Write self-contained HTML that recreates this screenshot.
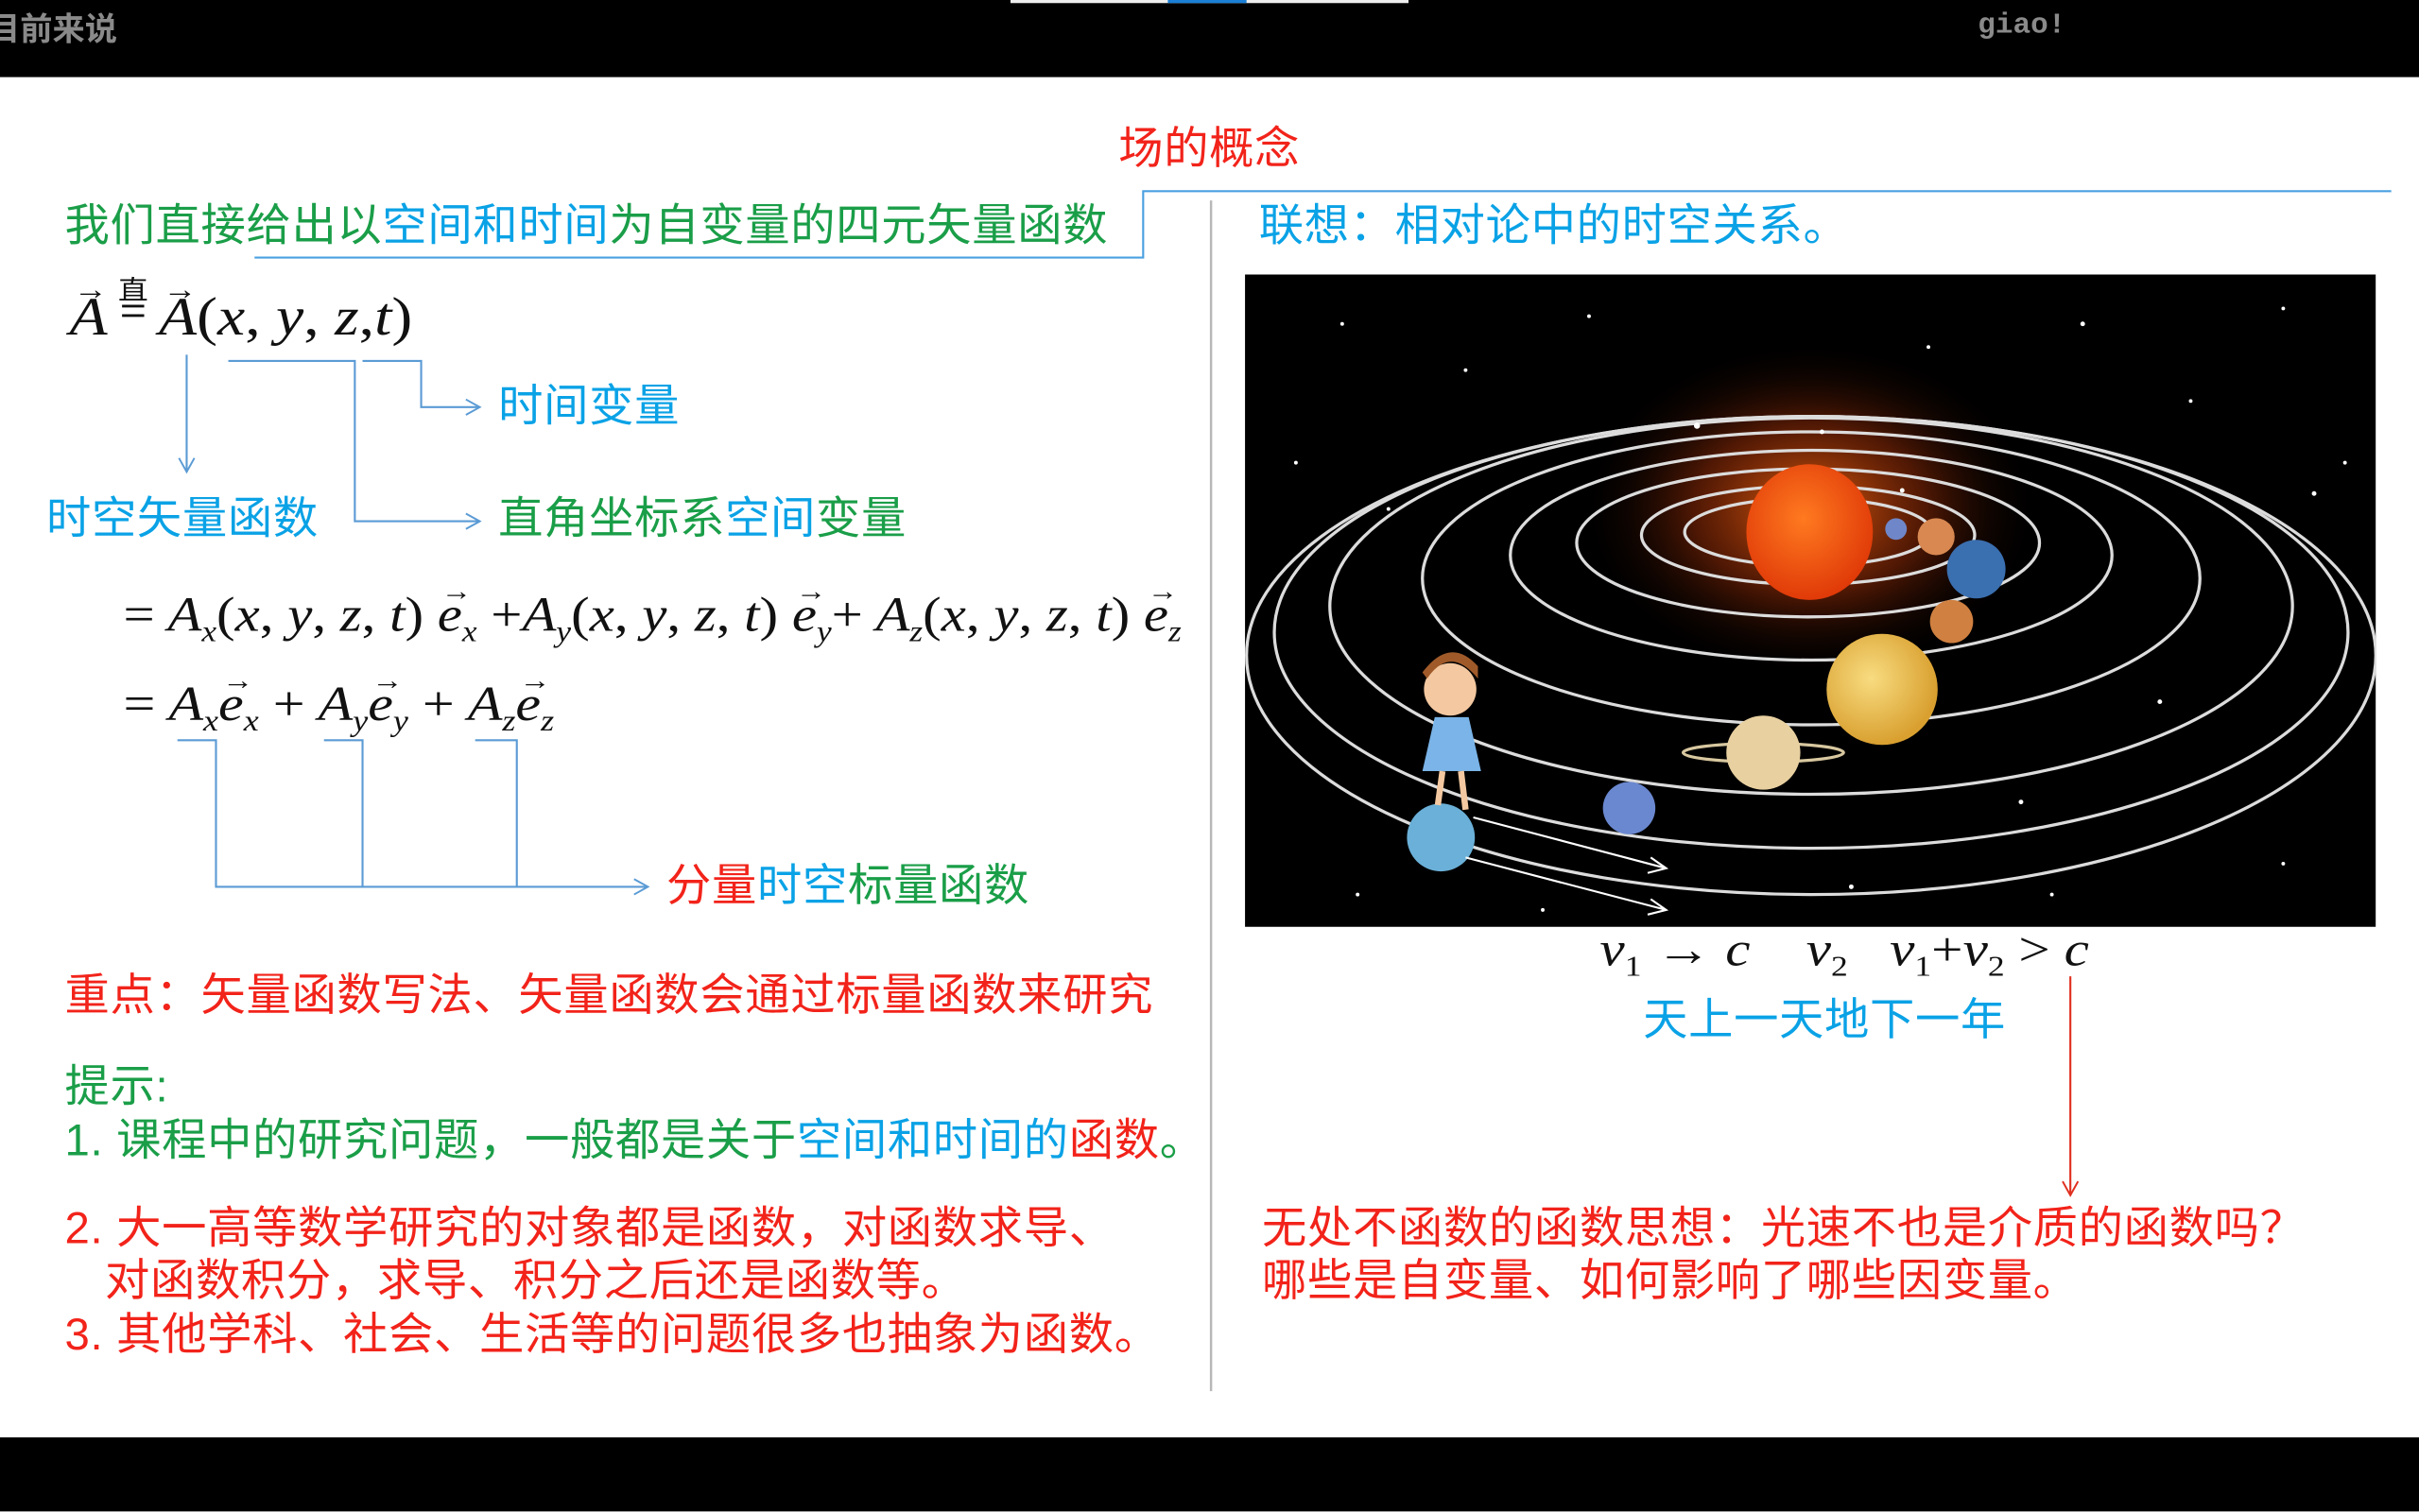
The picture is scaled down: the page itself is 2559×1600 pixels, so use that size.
<!DOCTYPE html>
<html><head><meta charset="utf-8"><style>
html,body{margin:0;padding:0;background:#fff;}
body{width:2559px;height:1600px;overflow:hidden;position:relative;}
#s{position:absolute;left:0;top:0;width:1568px;height:980px;transform:scale(1.63202);transform-origin:0 0;background:#fff;font-family:"Liberation Sans","Noto Sans CJK SC",sans-serif;}
.t{position:absolute;font-size:29px;line-height:34px;white-space:nowrap;letter-spacing:0.4px;}
.g{color:#1a9e48}.b{color:#0aa2e6}.r{color:#f2231a}
.m{position:absolute;font-family:"Liberation Serif",serif;font-style:italic;white-space:nowrap;color:#111;transform-origin:0 50%;}
.m sub{font-size:60%;vertical-align:-0.35em}
.up{font-style:normal}
.v{position:relative;display:inline-block}
.v::before{content:"\2192";position:absolute;left:0.12em;top:-0.42em;font-size:0.55em;font-style:normal}
</style></head><body><div id="s">
<div style="position:absolute;left:0;top:0;width:1568px;height:50px;background:#000"></div>
<div style="position:absolute;left:655px;top:0;width:258px;height:2px;background:#eee"></div>
<div style="position:absolute;left:757px;top:0;width:51px;height:2px;background:#1a7fd6"></div>
<div style="position:absolute;left:-8px;top:3px;color:#8a8a8a;font-weight:bold;font-size:21px;font-family:'Liberation Sans','Noto Sans CJK SC',sans-serif">目前来说</div>
<div style="position:absolute;left:1282px;top:5px;color:#8a8a8a;font-weight:bold;font-size:19px;font-family:'Liberation Mono',monospace">giao!</div>
<div style="position:absolute;left:0;top:932px;width:1568px;height:48px;background:#000"></div>

<svg style="position:absolute;left:0;top:0" width="1568" height="980">
<defs><marker id="ab" markerWidth="12" markerHeight="12" refX="10" refY="6" orient="auto" markerUnits="userSpaceOnUse"><path d="M1,1 L10,6 L1,11" fill="none" stroke="#5b9bd5" stroke-width="1.2"/></marker>
<marker id="ar" markerWidth="12" markerHeight="12" refX="10" refY="6" orient="auto" markerUnits="userSpaceOnUse"><path d="M1,1 L10,6 L1,11" fill="none" stroke="#e03020" stroke-width="1.2"/></marker></defs>
<g stroke="#5b9bd5" stroke-width="1.3" fill="none">
<path d="M165,167 H741 V124 H1550" stroke="#4aa0e0"/>
<path d="M121,230 V306" marker-end="url(#ab)"/>
<path d="M148,234 H230 V338 H311" marker-end="url(#ab)"/>
<path d="M235,234 H273 V264 H311" marker-end="url(#ab)"/>
<path d="M115,480 H140 V575 H420" marker-end="url(#ab)"/>
<path d="M210,480 H235 V575"/>
<path d="M308,480 H335 V575"/>
</g>
<path d="M785,130 V902" stroke="#b8b8b8" stroke-width="1.5"/>
<path d="M1342,633 V775" stroke="#e03020" stroke-width="1.3" marker-end="url(#ar)"/>
</svg>

<div class="t r" style="left:725px;top:80px">场的概念</div>
<div class="t g" style="left:42px;top:130px">我们直接给出以<span class="b">空间和时间</span>为自变量的四元矢量函数</div>
<div class="m" style="left:45px;top:186px;font-size:35px;transform:scaleX(1.15)"><span class="v">A</span><span style="font-style:normal;font-size:26px;display:inline-block;position:relative;top:-6px;margin:0 6px;line-height:14px;text-align:center;font-family:'Noto Sans CJK SC'"><span style="font-size:17px;display:block">直</span>=</span><span class="v">A</span><span class="up">(</span>x<span class="up">,</span> y<span class="up">,</span> z<span class="up">,</span>t<span class="up">)</span></div>
<div class="t b" style="left:323px;top:247px">时间变量</div>
<div class="t b" style="left:30px;top:320px">时空矢量函数</div>
<div class="t g" style="left:323px;top:320px">直角坐标系<span class="b">空间</span>变量</div>
<div class="m" style="left:80px;top:380px;font-size:32px;transform:scaleX(1.127)"><span class="up">=</span> A<sub>x</sub><span class="up">(</span>x<span class="up">,</span> y<span class="up">,</span> z<span class="up">,</span> t<span class="up">)</span> <span class="v">e</span><sub>x</sub> <span class="up">+</span>A<sub>y</sub><span class="up">(</span>x<span class="up">,</span> y<span class="up">,</span> z<span class="up">,</span> t<span class="up">)</span> <span class="v">e</span><sub>y</sub><span class="up">+</span> A<sub>z</sub><span class="up">(</span>x<span class="up">,</span> y<span class="up">,</span> z<span class="up">,</span> t<span class="up">)</span> <span class="v">e</span><sub>z</sub></div>
<div class="m" style="left:80px;top:438px;font-size:32px;transform:scaleX(1.15)"><span class="up">=</span> A<sub>x</sub><span class="v">e</span><sub>x</sub> <span class="up">+</span> A<sub>y</sub><span class="v">e</span><sub>y</sub> <span class="up">+</span> A<sub>z</sub><span class="v">e</span><sub>z</sub></div>
<div class="t r" style="left:432px;top:558px">分量<span class="b">时空</span><span class="g">标量函数</span></div>
<div class="t r" style="left:42px;top:629px">重点：矢量函数写法、矢量函数会通过标量函数来研究</div>
<div class="t g" style="left:42px;top:688px">提示:</div>
<div class="t g" style="left:42px;top:723px">1. 课程中的研究问题，一般都是关于<span class="b">空间和时间的</span><span class="r">函数</span>。</div>
<div class="t r" style="left:42px;top:780px">2. 大一高等数学研究的对象都是函数，对函数求导、</div>
<div class="t r" style="left:68px;top:814px">对函数积分，求导、积分之后还是函数等。</div>
<div class="t r" style="left:42px;top:849px">3. 其他学科、社会、生活等的问题很多也抽象为函数。</div>

<div class="t b" style="left:816px;top:130px">联想：相对论中的时空关系。</div>

<svg style="position:absolute;left:807px;top:178px" width="733" height="423" viewBox="807 178 733 423">
<defs>
<radialGradient id="glow" cx="0.5" cy="0.5" r="0.5"><stop offset="0" stop-color="#ff6a10" stop-opacity="0.9"/><stop offset="0.5" stop-color="#a03008" stop-opacity="0.5"/><stop offset="1" stop-color="#000" stop-opacity="0"/></radialGradient>
<radialGradient id="sun" cx="0.45" cy="0.4" r="0.6"><stop offset="0" stop-color="#ff7a20"/><stop offset="1" stop-color="#e03a08"/></radialGradient>
<radialGradient id="jup" cx="0.4" cy="0.4" r="0.6"><stop offset="0" stop-color="#f8dc80"/><stop offset="1" stop-color="#d9a030"/></radialGradient>
</defs>
<rect x="807" y="178" width="733" height="423" fill="#000"/>
<ellipse cx="1173" cy="330" rx="150" ry="110" fill="url(#glow)"/>
<g fill="none" stroke="#dcdcdc" stroke-width="2">
<ellipse cx="1172" cy="345" rx="80" ry="22"/>
<ellipse cx="1172" cy="347" rx="108" ry="32"/>
<ellipse cx="1172" cy="352" rx="150" ry="48"/>
<ellipse cx="1174" cy="360" rx="195" ry="68"/>
<ellipse cx="1174" cy="375" rx="252" ry="95"/>
<ellipse cx="1174" cy="393" rx="312" ry="122"/>
<ellipse cx="1174" cy="410" rx="348" ry="140"/>
<ellipse cx="1174" cy="425" rx="366" ry="155"/>
</g>
<ellipse cx="1173" cy="345" rx="41" ry="44" fill="url(#sun)"/>
<circle cx="1229" cy="343" r="7" fill="#6f86c8"/>
<circle cx="1255" cy="348" r="12" fill="#d88850"/>
<circle cx="1281" cy="369" r="19" fill="#3a6fb0"/>
<circle cx="1265" cy="403" r="14" fill="#d08040"/>
<circle cx="1220" cy="447" r="36" fill="url(#jup)"/>
<ellipse cx="1143" cy="488" rx="52" ry="6" fill="none" stroke="#d8c8a0" stroke-width="2"/>
<circle cx="1143" cy="488" r="24" fill="#e8d0a0"/>
<circle cx="1056" cy="524" r="17" fill="#6a88d0"/>
<circle cx="934" cy="543" r="22" fill="#6ab0d8"/>
<g stroke="#fff" stroke-width="1.3" fill="none">
<path d="M955,530 L1080,563 M1070,556 L1080,563 L1068,566"/>
<path d="M950,556 L1080,590 M1070,583 L1080,590 L1068,593"/>
</g>
<g fill="#fff">
<circle cx="940" cy="447" r="17" fill="#f4c8a0"/>
<path d="M925,440 Q940,418 958,440 L958,432 Q940,412 922,436Z" fill="#a05a2a"/>
<path d="M930,465 L952,465 L960,500 L922,500Z" fill="#7ab4e8"/>
<path d="M935,500 L932,522 M947,500 L950,525" stroke="#f4c8a0" stroke-width="4"/>
<circle cx="1100" cy="276" r="2"/><circle cx="1181" cy="280" r="1.5"/><circle cx="1233" cy="318" r="1.5"/><circle cx="1500" cy="320" r="1.5"/>
<circle cx="870" cy="210" r="1.2"/><circle cx="950" cy="240" r="1.2"/><circle cx="1030" cy="205" r="1.2"/><circle cx="1250" cy="225" r="1.2"/><circle cx="1350" cy="210" r="1.5"/><circle cx="1420" cy="260" r="1.2"/><circle cx="1480" cy="200" r="1.2"/><circle cx="1520" cy="300" r="1.2"/><circle cx="840" cy="300" r="1.2"/><circle cx="900" cy="330" r="1.2"/><circle cx="1310" cy="520" r="1.5"/><circle cx="1400" cy="455" r="1.5"/><circle cx="1200" cy="575" r="1.5"/><circle cx="1480" cy="560" r="1.2"/><circle cx="1000" cy="590" r="1.2"/><circle cx="1330" cy="580" r="1.2"/><circle cx="880" cy="580" r="1.2"/>
</g>
</svg>

<div class="m" style="left:1037px;top:598px;font-size:31px;transform:scaleX(1.17)">v<sub class="up">1</sub> <span class="up">&#8594;</span> c &#160;&#160; v<sub class="up">2</sub> &#160;&#160;v<sub class="up">1</sub><span class="up">+</span>v<sub class="up">2</sub> <span class="up">&gt;</span> c</div>
<div class="t b" style="left:1065px;top:645px">天上一天地下一年</div>
<div class="t r" style="left:818px;top:780px">无处不函数的函数思想：光速不也是介质的函数吗？</div>
<div class="t r" style="left:818px;top:814px">哪些是自变量、如何影响了哪些因变量。</div>
</div></body></html>
